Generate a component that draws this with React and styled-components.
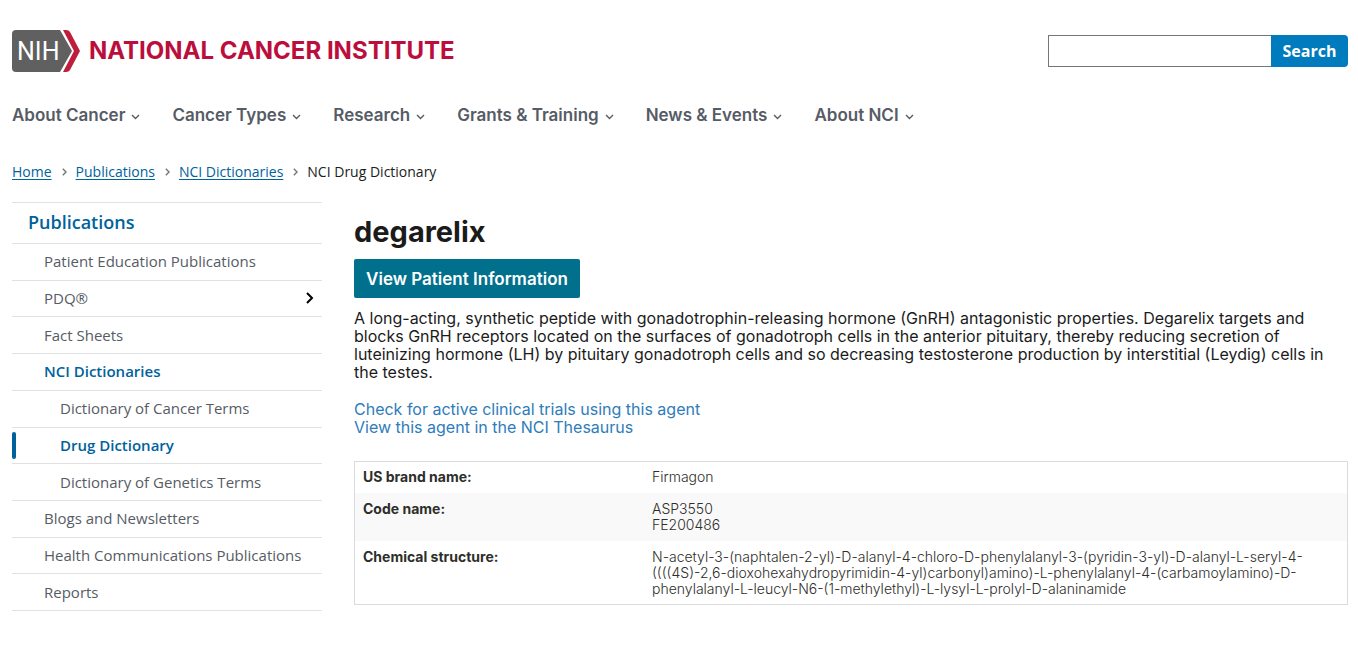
import React from "react";
import styled, { createGlobalStyle, css } from "styled-components";

const GlobalStyle = createGlobalStyle`
  *, *::before, *::after { box-sizing: border-box; }
  body {
    margin: 0;
    background: #fff;
    color: #1b1b1b;
    font-family: "Open Sans", sans-serif;
    font-size: 15px;
  }
`;

const display = `Inter, "Open Sans", sans-serif`;

const Page = styled.div`
  padding: 0 10px 46px 12px;
`;

const Header = styled.header`
  display: flex;
  align-items: center;
  justify-content: space-between;
  padding-top: 29px;
`;

const LogoLink = styled.a`
  display: flex;
  align-items: center;
  gap: 9px;
  color: #bb0e3d;
  text-decoration: none;
`;

const LogoMark = styled.svg`
  display: block;
  width: 68px;
  height: 44px;
`;

const LogoName = styled.span`
  font: 700 24px/32px ${display};
  white-space: nowrap;
`;

const SearchForm = styled.form`
  display: flex;
  height: 32px;
`;

const SearchInput = styled.input`
  width: 223px;
  border: 1px solid #71767a;
  border-right: 0;
  border-radius: 0;
  padding: 0 8px;
  font: 400 16px "Open Sans", sans-serif;
  outline: none;
`;

const SearchButton = styled.button`
  width: 77px;
  border: 0;
  border-radius: 0 4px 4px 0;
  padding: 0;
  background: #007bbd;
  color: #fff;
  font: 700 16px/24px "Open Sans", sans-serif;
`;

const Nav = styled.nav`
  display: flex;
  gap: 32px;
  padding-top: 28px;
`;

const NavButton = styled.button`
  display: flex;
  align-items: center;
  gap: 6px;
  border: 0;
  padding: 0;
  background: none;
  color: #565c65;
  font: 600 17px/28px ${display};
  white-space: nowrap;

  svg {
    width: 9px;
    height: 6px;
    margin-top: 4px;
  }
`;

const Breadcrumb = styled.ol`
  display: flex;
  align-items: center;
  margin: 33px 0 0;
  padding: 0;
  list-style: none;
  font-size: 14px;
  line-height: 20px;
`;

const Crumb = styled.li`
  display: flex;
  align-items: center;

  a {
    color: #00629b;
    text-underline-offset: 2px;
  }

  svg {
    width: 5px;
    height: 8px;
    margin: 0 9px 0 10px;
  }
`;

const Columns = styled.div`
  display: grid;
  grid-template-columns: 310px minmax(0, 1fr);
  column-gap: 32px;
  align-items: start;
  padding-top: 20px;
`;

const Sidebar = styled.nav`
  border-top: 1px solid #dfe1e2;
`;

const SidebarTitle = styled.a`
  display: block;
  border-bottom: 1px solid #dfe1e2;
  padding: 7px 16px 9px;
  color: #00629b;
  font-size: 18px;
  font-weight: 600;
  line-height: 24px;
  text-decoration: none;
`;

const SideList = styled.ul`
  display: grid;
  grid-auto-rows: 1fr;
  min-height: 367px;
  margin: 0;
  padding: 0;
  list-style: none;
`;

const SideItem = styled.li`
  position: relative;
  display: flex;
  align-items: center;
  justify-content: space-between;
  border-bottom: 1px solid #dfe1e2;
  padding: 0 8px 1px ${(p) => (p.$nested ? 48 : 32)}px;

  a {
    color: ${(p) => (p.$active ? "#00629b" : "#565c65")};
    font-weight: ${(p) => (p.$active ? 600 : 400)};
    line-height: 20px;
    text-decoration: none;
  }

  svg {
    width: 8px;
    height: 12px;
  }

  ${(p) =>
    p.$current &&
    css`
      &::before {
        content: "";
        position: absolute;
        inset: 4px auto 4px 0;
        width: 4px;
        border-radius: 4px;
        background: #00629b;
      }
    `}
`;

const Main = styled.main`
  padding-top: 12px;
`;

const Title = styled.h1`
  margin: 0;
  color: #1b1b1b;
  font: 700 29px/36px ${display};
`;

const PatientButton = styled.button`
  display: block;
  width: 226px;
  height: 39px;
  margin: 9px 0 11px;
  border: 0;
  border-radius: 2px;
  padding: 0;
  background: #00708c;
  color: #fff;
  font: 600 17px/24px ${display};
  white-space: nowrap;
`;

const Definition = styled.p`
  margin: 0 0 19px;
  font: 400 16px/18px ${display};
`;

const Links = styled.div`
  display: flex;
  flex-direction: column;
  align-items: flex-start;
  font: 400 16px/18px ${display};

  a {
    color: #2e7cba;
    text-decoration: none;
  }
`;

const Details = styled.table`
  width: 100%;
  margin-top: 25px;
  outline: 1px solid #d9dbdc;
  outline-offset: -1px;
  border-collapse: collapse;
  table-layout: fixed;
  color: #2e2e2a;
  font: 300 14px/16px ${display};

  th,
  td {
    padding: 8px 9px;
    text-align: left;
    vertical-align: top;
  }

  th {
    width: 289px;
    font-weight: 700;
  }

  tr:nth-child(even) {
    background: #f9f9f9;
  }
`;

const DownChevron = () => (
  <svg viewBox="0 0 9 6" fill="none" stroke="#565c65" strokeWidth="1.4" aria-hidden="true">
    <path d="M1 1l3.5 3.5L8 1" />
  </svg>
);

const CrumbChevron = () => (
  <svg viewBox="0 0 5 8" fill="none" stroke="#71767a" strokeWidth="1.4" aria-hidden="true">
    <path d="M.8.8L4 4 .8 7.2" />
  </svg>
);

const navItems = [
  "About Cancer",
  "Cancer Types",
  "Research",
  "Grants & Training",
  "News & Events",
  "About NCI",
];

const sideItems = [
  { label: "Patient Education Publications" },
  { label: "PDQ®", expandable: true },
  { label: "Fact Sheets" },
  { label: "NCI Dictionaries", active: true },
  { label: "Dictionary of Cancer Terms", nested: true },
  { label: "Drug Dictionary", nested: true, active: true, current: true },
  { label: "Dictionary of Genetics Terms", nested: true },
  { label: "Blogs and Newsletters" },
  { label: "Health Communications Publications" },
  { label: "Reports" },
];

const details = [
  { name: "US brand name:", lines: ["Firmagon"] },
  { name: "Code name:", lines: ["ASP3550", "FE200486"] },
  {
    name: "Chemical structure:",
    lines: [
      "N-acetyl-3-(naphtalen-2-yl)-D-alanyl-4-chloro-D-phenylalanyl-3-(pyridin-3-yl)-D-alanyl-L-seryl-4-",
      "((((4S)-2,6-dioxohexahydropyrimidin-4-yl)carbonyl)amino)-L-phenylalanyl-4-(carbamoylamino)-D-",
      "phenylalanyl-L-leucyl-N6-(1-methylethyl)-L-lysyl-L-prolyl-D-alaninamide",
    ],
  },
];

export default function App() {
  return (
    <>
      <GlobalStyle />
      <Page>
        <Header>
          <LogoLink href="#home">
            <LogoMark viewBox="0 0 68 44" aria-hidden="true">
              <path d="M4 1H48L60 22 48 43H4Q0 43 0 39V5Q0 1 4 1Z" fill="#606060" />
              <path d="M51 1H54Q57 1 58 3L68 22 58 41Q57 43 54 43H51L62 22Z" fill="#be1e3c" />
              <text x="5" y="31" fill="#fff" fontFamily="Roboto, sans-serif" fontSize="25" fontWeight="400">
                NIH
              </text>
            </LogoMark>
            <LogoName>NATIONAL CANCER INSTITUTE</LogoName>
          </LogoLink>
          <SearchForm role="search" onSubmit={(e) => e.preventDefault()}>
            <SearchInput type="search" aria-label="Search" />
            <SearchButton type="submit">Search</SearchButton>
          </SearchForm>
        </Header>
        <Nav aria-label="Primary">
          {navItems.map((label) => (
            <NavButton key={label} type="button">
              {label}
              <DownChevron />
            </NavButton>
          ))}
        </Nav>
        <Breadcrumb aria-label="Breadcrumbs">
          {["Home", "Publications", "NCI Dictionaries"].map((label) => (
            <Crumb key={label}>
              <a href="#crumb">{label}</a>
              <CrumbChevron />
            </Crumb>
          ))}
          <Crumb aria-current="page">NCI Drug Dictionary</Crumb>
        </Breadcrumb>
        <Columns>
          <Sidebar aria-label="Section">
            <SidebarTitle href="#publications">Publications</SidebarTitle>
            <SideList>
              {sideItems.map((item) => (
                <SideItem
                  key={item.label}
                  $nested={item.nested}
                  $active={item.active}
                  $current={item.current}
                >
                  <a href="#section">{item.label}</a>
                  {item.expandable && (
                    <svg viewBox="0 0 8 12" fill="none" stroke="#000" strokeWidth="2" aria-hidden="true">
                      <path d="M1 1l5 5-5 5" />
                    </svg>
                  )}
                </SideItem>
              ))}
            </SideList>
          </Sidebar>
          <Main>
            <Title>degarelix</Title>
            <PatientButton type="button">View Patient Information</PatientButton>
            <Definition>
              A long-acting, synthetic peptide with gonadotrophin-releasing hormone (GnRH) antagonistic
              properties. Degarelix targets and
              <br />
              blocks GnRH receptors located on the surfaces of gonadotroph cells in the anterior
              pituitary, thereby reducing secretion of
              <br />
              luteinizing hormone (LH) by pituitary gonadotroph cells and so decreasing testosterone
              production by interstitial (Leydig) cells in
              <br />
              the testes.
            </Definition>
            <Links>
              <a href="#trials">Check for active clinical trials using this agent</a>
              <a href="#thesaurus">View this agent in the NCI Thesaurus</a>
            </Links>
            <Details>
              <tbody>
                {details.map(({ name, lines }) => (
                  <tr key={name}>
                    <th scope="row">{name}</th>
                    <td>
                      {lines.map((line, i) => (
                        <React.Fragment key={line}>
                          {i > 0 && <br />}
                          {line}
                        </React.Fragment>
                      ))}
                    </td>
                  </tr>
                ))}
              </tbody>
            </Details>
          </Main>
        </Columns>
      </Page>
    </>
  );
}
